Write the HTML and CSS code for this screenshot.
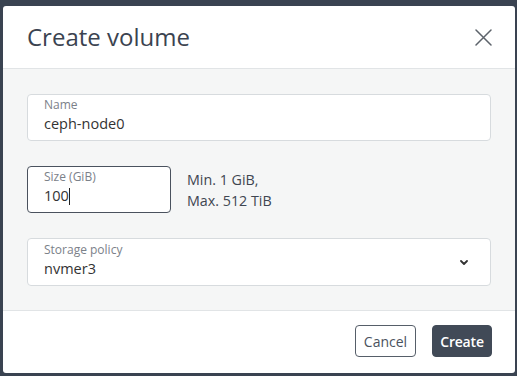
FILE: index.html
```html
<!DOCTYPE html>
<html lang="en">
<head>
    <meta charset="UTF-8">
    <meta name="viewport" content="width=device-width, initial-scale=1.0">
    <title>Create volume</title>
    <link rel="stylesheet" href="styles.css">
</head>
<body>
    <div class="dialog">
        <div class="dialog-header">
            <h1>Create volume</h1>
            <button class="close" aria-label="Close">
                <svg width="17" height="17" viewBox="0 0 17 17">
                    <path d="M1 1 L16 16 M16 1 L1 16" stroke="#5d636b" stroke-width="1.5" fill="none" stroke-linecap="round"/>
                </svg>
            </button>
        </div>
        <div class="dialog-body">
            <div class="field">
                <span class="field-label">Name</span>
                <span class="field-value">ceph-node0</span>
            </div>
            <div class="size-row">
                <div class="field field-size focused">
                    <span class="field-label">Size (GiB)</span>
                    <span class="field-value">100<span class="caret"></span></span>
                </div>
                <div class="hint">
                    <div>Min. 1 GiB,</div>
                    <div>Max. 512 TiB</div>
                </div>
            </div>
            <div class="field field-select">
                <div>
                    <span class="field-label">Storage policy</span>
                    <span class="field-value">nvmer3</span>
                </div>
                <svg class="chevron" width="8" height="5" viewBox="0 0 8 5">
                    <path d="M1 1 L4 4 L7 1" stroke="#333" stroke-width="1.8" fill="none" stroke-linecap="round" stroke-linejoin="round"/>
                </svg>
            </div>
        </div>
        <div class="dialog-footer">
            <button class="btn btn-secondary">Cancel</button>
            <button class="btn btn-primary">Create</button>
        </div>
    </div>
</body>
</html>
```

FILE: styles.css
```css
body {
    font-family: 'Open Sans', 'Noto Sans', sans-serif;
    margin: 0;
    padding: 6px 2px 3px 3px;
    background: #3a4351;
    color: #333;
}
.dialog {
    width: 512px;
    height: 367px;
    background: #fff;
    border-radius: 3px;
    display: flex;
    flex-direction: column;
    overflow: hidden;
}
.dialog-header {
    height: 62px;
    display: flex;
    align-items: center;
    justify-content: space-between;
    padding: 0 23px 0 24px;
    border-bottom: 1px solid #e1e4e6;
}
.dialog-header h1 {
    margin: 0;
    font-size: 24px;
    font-weight: normal;
    color: #3b4350;
    padding-bottom: 1px;
}
.close {
    border: none;
    background: none;
    padding: 0;
    width: 17px;
    height: 17px;
    cursor: pointer;
}
.close svg {
    display: block;
}
.dialog-body {
    background: #f5f6f6;
    padding: 25px 24px 0 24px;
    height: 216px;
    border-bottom: 1px solid #e1e4e6;
}
.field {
    background: #fff;
    border: 1px solid #d7dbde;
    border-radius: 4px;
    padding: 1px 16px 6px;
    height: 38px;
}
.field-label {
    display: block;
    font-size: 12px;
    line-height: 18px;
    color: #7b8189;
}
.field-value {
    display: block;
    font-size: 14.5px;
    line-height: 20px;
    color: #333;
}
.size-row {
    display: flex;
    align-items: center;
    gap: 16px;
    margin: 25px 0;
}
.field-size {
    width: 110px;
}
.field.focused {
    border-color: #4a525e;
}
.caret {
    display: inline-block;
    width: 1px;
    height: 17px;
    background: #222;
    vertical-align: -4px;
}
.hint {
    font-size: 14.3px;
    line-height: 21px;
    color: #3f4651;
}
.field-select {
    display: flex;
    align-items: center;
    justify-content: space-between;
    height: 39px;
    padding-right: 22px;
}
.chevron {
    display: block;
    margin-top: 5px;
}
.dialog-footer {
    flex: 1;
    display: flex;
    align-items: center;
    justify-content: flex-end;
    gap: 16px;
    padding: 0 23px 2px 0;
}
.btn {
    height: 32px;
    font-family: 'Open Sans', 'Noto Sans', sans-serif;
    font-size: 14px;
    border-radius: 4px;
    cursor: pointer;
    padding: 0;
}
.btn-secondary {
    width: 61px;
    background: #fff;
    border: 1px solid #565e69;
    color: #4a525e;
}
.btn-primary {
    width: 60px;
    background: #414a57;
    border: 1px solid #414a57;
    color: #fff;
    font-weight: 600;
    letter-spacing: -0.2px;
}
```
